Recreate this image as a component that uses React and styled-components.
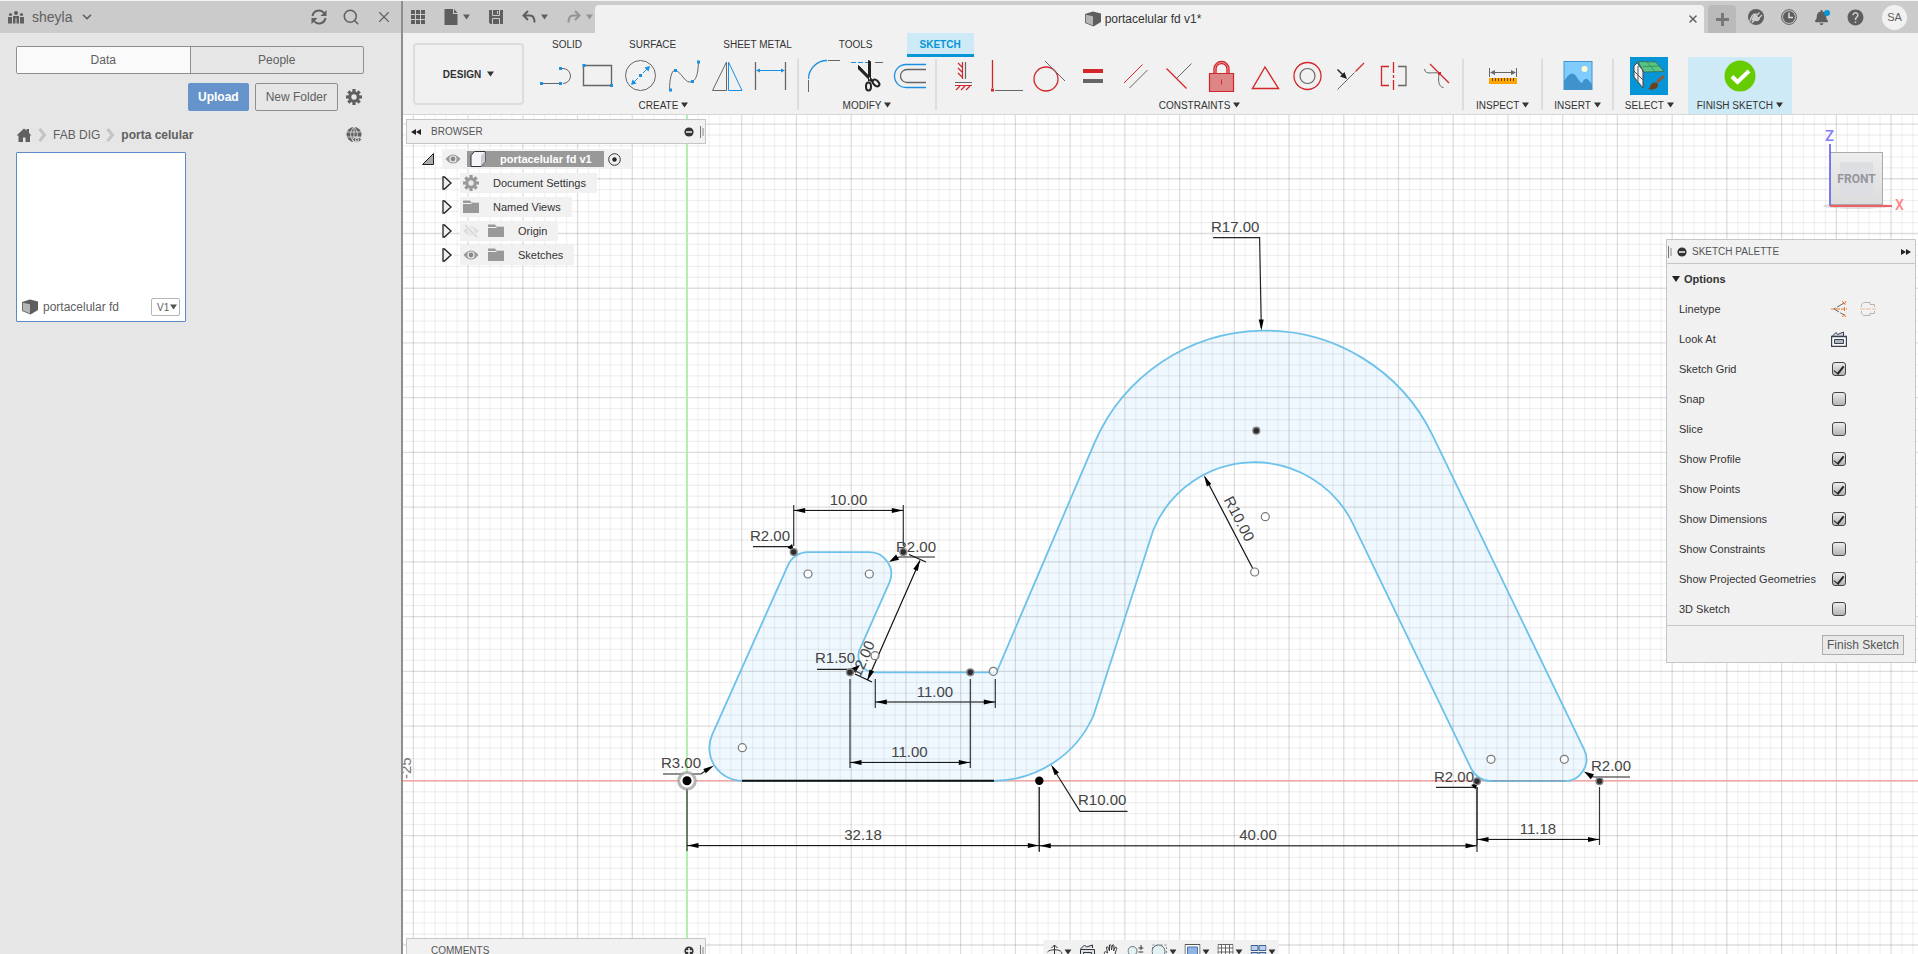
import React, { useState } from "react";
import styled, { createGlobalStyle, css } from "styled-components";
import { FaBell, FaSyncAlt } from "react-icons/fa";
import { MdHelp } from "react-icons/md";
import { ChevronDown, Search, X } from "lucide-react";

const GRAY = "#666666";
const BLUE = "#1a8fe3";
const RED = "#d2262b";

/* ---------- small shared drawings ---------- */

const Caret = ({ color = "#333" }) => (
    <svg width="7" height="6" viewBox="0 0 7 6" aria-hidden="true">
        <path d="M0 0.5h7L3.5 5.5z" fill={color} />
    </svg>
);

const CubeIcon = () => (
    <svg width="16" height="16" viewBox="0 0 16 16" aria-hidden="true">
        <path d="M0 3 8 0.500 16 2.500V11L8.500 15.500 0 12z" fill="#5e5e5e" />
        <path d="M0.800 3.800 8 5.200V14.600L0.800 11.500z" fill="#b5b5b5" />
    </svg>
);

const GearIcon = ({ color = "#606060" }) => (
    <svg width="16" height="16" viewBox="-8 -8 16 16" aria-hidden="true">
        {[0, 45, 90, 135].map((a) => (
            <rect key={a} x="-1.6" y="-8" width="3.2" height="16" fill={color} transform={`rotate(${a})`} />
        ))}
        <circle r="5.800" fill={color} />
        <circle r="2.700" fill="#e9e9e9" />
    </svg>
);

const EyeIcon = ({ off }) => (
    <svg width="16" height="16" viewBox="0 0 16 16" aria-hidden="true">
        <path d="M0.500 8Q8-1 15.500 8 8 17 0.500 8z" fill={off ? "#dcdcdc" : "#999"} />
        <circle cx="8" cy="8" r="3.600" fill="#f1f1f1" />
        <circle cx="8" cy="8" r="2.400" fill={off ? "#dcdcdc" : "#888"} />
        {off && <path d="M3 2l11 12" stroke="#f1f1f1" strokeWidth="3" />}
        {off && <path d="M2 2l12 12" stroke="#d4d4d4" strokeWidth="1.300" />}
    </svg>
);

const FolderIcon = () => (
    <svg width="16" height="16" viewBox="0 0 16 16" aria-hidden="true">
        <path d="M0 1.500h7l1 1.500h8v11H0z" fill="#999" />
        <path d="M0 4.500h8l1.500-1.300H16" stroke="#f1f1f1" fill="none" />
    </svg>
);

const CircleMark = ({ plus }) => (
    <svg width="10" height="10" viewBox="0 0 10 10" aria-hidden="true">
        <circle cx="5" cy="5" r="4.600" fill="#333" />
        <path d={plus ? "M2 5h6M5 2v6" : "M2 5h6"} stroke="#fff" strokeWidth="1.400" />
    </svg>
);

const DoubleArrow = ({ right }) => (
    <svg width="10" height="6" viewBox="0 0 10 6" aria-hidden="true">
        <path d={right ? "M0 0l5 3-5 3zM5 0l5 3-5 3z" : "M5 0L0 3l5 3zM10 0L5 3l5 3z"} fill="#222" />
    </svg>
);

const Grip = () => (
    <svg width="4" height="12" viewBox="0 0 4 12" aria-hidden="true">
        <path d="M0.500 0v12" stroke="#777" />
        <path d="M3 2v8" stroke="#888" />
    </svg>
);

/* ---------- ribbon drawings, all on a 32 box ---------- */

const Dot = ({ x, y, c = BLUE }) => <rect x={x - 1.5} y={y - 1.5} width="3" height="3" fill={c} />;

const createTools = [
    ["Line", <><path d="M1 23.500H20M20 8.500h3a7.500 7.500 0 0 1 0 15" stroke={GRAY} /><Dot x={1.5} y={23.5} /><Dot x={20.5} y={23.5} /><Dot x={20.5} y={8.5} /></>],
    ["Rectangle", <><path d="M0.500 5.500h28v20h-28z" stroke={GRAY} strokeWidth="1.400" /><Dot x={1} y={5.5} /><Dot x={28.5} y={25.5} /></>],
    ["Circle", <><circle cx="14.500" cy="15.500" r="15" stroke={GRAY} /><path d="M7 23l5-5M17 13l5-5" stroke={BLUE} /><path d="M5 25l1.500-5.500 4 4zM24 6l-1.500 5.500-4-4z" fill={BLUE} /><Dot x={14.5} y={15.5} /></>],
    ["Spline", <><path d="M0.500 30.500C0.500 18 3 9 6.500 10.500 13 12 16 25 23.500 21.500 28 19 29 12 29.500 2" stroke={GRAY} /><Dot x={1.5} y={30} /><Dot x={6.5} y={10.5} /><Dot x={23.5} y={21.5} /><Dot x={29.5} y={2} /></>],
    ["Mirror", <><path d="M0.500 30.500 14.500 2v28.500z" stroke={GRAY} /><path d="M16.500 2v28.500h13.500z" stroke={BLUE} /></>],
    ["Sketch Dimension", <><path d="M0.500 2v28M30.500 2v28" stroke={GRAY} strokeWidth="1.300" /><path d="M2 10.500h27" stroke={BLUE} /><path d="M1 10.500l4-2v4zM30 10.500l-4-2v4z" fill={BLUE} /></>],
];

const modifyTools = [
    ["Fillet", <><path d="M0.500 32V20M20 0.500h12" stroke={GRAY} /><path d="M0.500 19A18.500 18.500 0 0 1 19 0.500" stroke={BLUE} strokeWidth="1.300" /></>],
    ["Trim", <><path d="M0 2.500h17" stroke={BLUE} strokeDasharray="5 2" /><path d="M24 2.500h8" stroke={GRAY} /><path d="M17.500 0.500l2 1v18l-2 1.500zM7.500 5.500V9l13 13 1.500-1.500z" fill="#222" stroke="#222" strokeWidth="1" /><ellipse cx="17.500" cy="26.500" rx="2.500" ry="4" stroke="#222" strokeWidth="2" /><ellipse cx="25" cy="23" rx="2.500" ry="4" stroke="#222" strokeWidth="2" transform="rotate(-45 25 23)" /></>],
    ["Offset", <><path d="M32 4.500H12a11.500 11.500 0 0 0 0 23h20" stroke={BLUE} strokeWidth="1.300" /><path d="M32 9.500H13a6.500 6.500 0 0 0 0 13h19" stroke={GRAY} strokeWidth="1.300" /></>],
];

const constraintTools = [
    ["Horizontal/Vertical", <><path d="M15.500 2v17M8 25.500h17M11 3l4 4M11 8l4 4M11 13l4 4M9 30l4-4M14 30l4-4M19 30l4-4" stroke={RED} strokeWidth="1.200" /><path d="M18.500 2v17M8 22.500h17" stroke={GRAY} strokeWidth="1.200" /></>],
    ["Coincident", <><path d="M2.500 0v28" stroke={RED} strokeWidth="1.300" /><path d="M5 30.500h28" stroke={GRAY} /><Dot x={2.5} y={30} c={RED} /></>],
    ["Tangent", <><circle cx="13" cy="19" r="12" stroke={RED} strokeWidth="1.300" /><path d="M12 1l20 20" stroke={GRAY} /></>],
    ["Equal", <><path d="M7 11h20" stroke={RED} strokeWidth="4" /><path d="M7 21h20" stroke={GRAY} strokeWidth="4" /></>],
    ["Parallel", <><path d="M5 23 23.500 4.500" stroke={RED} /><path d="M10.500 28l18-18" stroke={GRAY} /></>],
    ["Perpendicular", <><path d="M4.500 8.500l20 20" stroke={RED} strokeWidth="1.200" /><path d="M14.500 18.500l15-15" stroke={GRAY} /></>],
    ["Fix/Unfix", <><path d="M10 13V9a6.500 6.500 0 0 1 13 0v4" stroke={RED} strokeWidth="3.400" /><path d="M10 13V9a6.500 6.500 0 0 1 13 0v4" stroke="#e79a9b" /><path d="M4.500 13.500h24v18h-24z" fill="#dd8688" stroke={RED} strokeWidth="1.200" /><path d="M16.500 19.500v5" stroke={RED} /></>],
    ["Polygon", <path d="M17 7 4.500 28.500h26z" stroke={RED} strokeWidth="1.400" />],
    ["Concentric", <><circle cx="16.500" cy="16" r="13.500" stroke={RED} strokeWidth="1.300" /><circle cx="16.500" cy="16" r="7.500" stroke={GRAY} strokeWidth="1.200" /></>],
    ["MidPoint", <><path d="M3.500 29.500l17-17" stroke={GRAY} /><path d="M21.500 11.500 30 3" stroke={RED} strokeWidth="1.200" /><path d="M3.500 9.500l6 6" stroke="#222" strokeWidth="1.400" /><path d="M13 19l-7-2.500 4.500-4.500z" fill="#222" /></>],
    ["Symmetry", <><path d="M12 6.500H4.500v19H12M16.500 2v11M16.500 15v3M16.500 20v10" stroke={RED} strokeWidth="1.300" /><path d="M21 6.500h8v19h-8" stroke={GRAY} strokeWidth="1.300" /></>],
    ["Curvature", <><path d="M10 4l19 19" stroke={RED} strokeWidth="1.200" /><path d="M4.500 9c1 7 9 2 15 4.500-2 5-1 14 4 14" stroke={GRAY} /><Dot x={19.5} y={13.5} c={RED} /></>],
];

const InspectArt = (
    <>
        <path d="M2.500 8v9M29.500 8v9M5 12.500h22" stroke={GRAY} />
        <path d="M3 12.500l5-2.500v5zM29 12.500l-5-2.500v5z" fill={GRAY} />
        <rect x="2" y="18" width="28" height="6" fill="#ffa500" />
        <path d="M5.500 18v3M8.500 18v3M11.500 18v3M14.500 18v3M17.500 18v3M20.500 18v3M23.500 18v3M26.500 18v3" stroke="#6b4a10" />
    </>
);

const InsertArt = (
    <>
        <rect x="2" y="1.500" width="28" height="28" fill="#80ccff" stroke="#4594d0" />
        <path d="M2 21c4-6 7-9 10-7s5 8 8 9c2-4 4-5 6-3.500l4 4.500v6H2z" fill="#3f93cd" />
        <circle cx="22.500" cy="9" r="3" fill="#fffbd0" />
    </>
);

const SelectArt = () => (
    <svg width="38" height="38" viewBox="0 0 38 38" aria-hidden="true">
        <rect width="38" height="38" fill="#0696d7" />
        <path d="M8 4.500 26 5l8 9.500-20 0.500z" fill="#58c585" stroke="#3c6650" strokeWidth="0.800" />
        <path d="M13 9.500l17-0.500M17 5l8 9.500" stroke="#2c8a52" fill="none" strokeWidth="0.800" />
        <path d="M4 9 7.500 5.500c1.500 5 5 5.500 5.500 9.500v16L4 20z" fill="#f3f3f3" stroke="#444" />
        <path d="M8 9v15.500M4 14l9 9" stroke="#555" />
        <path d="M34 19 27 25" stroke="#8c5a3c" strokeWidth="3" />
        <path d="M18 32c3-1 2-6 6-6.500s5 3 3 5-6 3-9 1.500z" fill="#704018" />
    </svg>
);

/* ---------- styles ---------- */

const GlobalStyle = createGlobalStyle`
    * {
        box-sizing: border-box;
    }
    html, body, #root {
        height: 100%;
        margin: 0;
    }
    body {
        overflow: hidden;
        background: #f1f1f1;
        font-family: "Liberation Sans", Arial, sans-serif;
        font-size: 12px;
        color: #333;
    }
    button {
        font: inherit;
        color: inherit;
        border: none;
        background: none;
        padding: 0;
    }
    svg {
        display: block;
        flex: none;
    }
`;

const Shell = styled.div`
    display: flex;
    height: 100vh;
    border-top: 1px solid #f4f4f4;
`;

const DataPanel = styled.aside`
    flex: 0 0 403px;
    background: #e6e6e6;
    border-right: 2px solid #8f8f8f;
    color: #606060;
`;

const PanelHeader = styled.header`
    display: flex;
    align-items: center;
    gap: 8px;
    height: 32px;
    padding: 0 8px;
    background: #cbcbcb;
    font-size: 14px;
`;

const Spacer = styled.span`
    flex: 1;
`;

const HeaderActions = styled.div`
    display: flex;
    align-items: center;
    gap: 15px;
`;

const PanelBody = styled.div`
    display: flex;
    flex-direction: column;
    width: 348px;
    margin: 13px 0 0 16px;
`;

const Segments = styled.div`
    display: flex;
    height: 28px;
    border: 1px solid #8f8f8f;
    border-radius: 2px;
`;

const Segment = styled.button`
    flex: 1;
    background: ${(props) => (props.$active ? "#fafafa" : "transparent")};

    & + & {
        border-left: 1px solid #8f8f8f;
    }
`;

const UploadRow = styled.div`
    display: flex;
    align-items: center;
    justify-content: flex-end;
    gap: 6px;
    margin: 9px 2px 0 0;
`;

const PanelBtn = styled.button`
    height: 28px;
    border-radius: 2px;
    padding: 0 10px;
    ${(props) =>
        props.$primary
            ? css`
                  background: #6694ca;
                  color: white;
                  font-weight: bold;
              `
            : css`
                  border: 1px solid #8f8f8f;
                  margin-right: 2px;
              `}
`;

const Crumbs = styled.nav`
    display: flex;
    align-items: center;
    gap: 6px;
    height: 16px;
    margin: 16px 2px 9px 0;
`;

const Crumb = styled.a`
    color: #606060;
    text-decoration: none;
    font-weight: ${(props) => (props.$current ? "bold" : "normal")};
`;

const FileCard = styled.article`
    display: flex;
    align-items: flex-end;
    width: 170px;
    height: 170px;
    padding: 5px;
    background: white;
    border: 1px solid #5b8bc8;
    border-radius: 1px;
`;

const FileRow = styled.div`
    display: flex;
    align-items: center;
    gap: 5px;
    width: 100%;
`;

const VersionBtn = styled.button`
    display: flex;
    align-items: center;
    justify-content: space-between;
    width: 29px;
    height: 18px;
    padding: 0 2px 0 5px;
    border: 1px solid #b5b5b5;
    border-radius: 2px;
    font-size: 10px;
`;

const Workspace = styled.main`
    flex: 1;
    min-width: 0;
    display: flex;
    flex-direction: column;
`;

const TitleBar = styled.header`
    display: flex;
    align-items: flex-end;
    height: 32px;
    background: #cbcbcb;
`;

const QuickTools = styled.div`
    display: flex;
    align-items: center;
    gap: 19px;
    height: 32px;
    width: 192px;
    padding: 0 0 0 8px;
`;

const QuickBtn = styled.button`
    display: flex;
    align-items: center;
    gap: 5px;
    opacity: ${(props) => (props.$dim ? 0.5 : 1)};
`;

const DocTab = styled.div`
    flex: 1;
    display: flex;
    align-items: center;
    height: 28px;
    padding: 0 5px 0 4px;
    background: #f1f1f1;
    border-radius: 4px 4px 0 0;
`;

const DocTitle = styled.div`
    flex: 1;
    display: flex;
    align-items: center;
    justify-content: center;
    gap: 4px;
    height: 28px;
`;

const NewTab = styled.button`
    display: flex;
    align-items: center;
    justify-content: center;
    width: 28px;
    height: 28px;
    margin-left: 4px;
    background: #bababa;
    border-radius: 4px 4px 0 0;
`;

const StatusTools = styled.div`
    display: flex;
    align-items: center;
    gap: 17px;
    height: 32px;
    padding: 0 11px 0 12px;
    color: #5e5e5e;
`;

const BellBtn = styled.button`
    position: relative;
    font-size: 16px;

    &::after {
        content: "";
        position: absolute;
        top: 0;
        right: -1px;
        width: 6px;
        height: 6px;
        border-radius: 50%;
        background: #0696d7;
    }
`;

const Avatar = styled.button`
    width: 25px;
    height: 25px;
    border-radius: 50%;
    background: #f1f1f1;
    font-size: 11px;
`;

const Ribbon = styled.section`
    display: flex;
    height: 82px;
    border-bottom: 1px solid #d6d6d6;
    font-size: 10px;
    overflow: hidden;
`;

const DesignBtn = styled.button`
    display: flex;
    align-items: center;
    justify-content: center;
    gap: 6px;
    flex: none;
    width: 111px;
    height: 62px;
    margin: 10px 6px 0 10px;
    border: 2px solid #dddddd;
    border-radius: 4px;
    font-weight: bold;
`;

const Tabs = styled.div`
    display: flex;
    gap: 21px;
    height: 24px;
    padding-left: 9px;
`;

const Tab = styled.button`
    height: 24px;
    padding: 0 13px 2px;
    ${(props) =>
        props.$active &&
        css`
            background: #cdeaf6;
            color: #0696d7;
            font-weight: bold;
            border-bottom: 3px solid #0696d7;
            padding: 1px 13px 0;
        `}
`;

const Groups = styled.div`
    display: flex;
    height: 57px;
`;

const Group = styled.div`
    display: flex;
    flex-direction: column;
    align-items: center;
    justify-content: space-between;
    height: 57px;
    padding: 0 ${(props) => props.$pad || 11}px 2px;
    background: ${(props) => (props.$tint ? "#cdeaf6" : "transparent")};
    margin-left: ${(props) => (props.$tint ? 3 : 0)}px;
`;

const Divider = styled.span`
    width: 2px;
    height: 51px;
    margin-top: 2px;
    background: #dddddd;
`;

const ToolRow = styled.div`
    display: flex;
    align-items: center;
    gap: 11px;
    height: 38px;
`;

const ToolBtn = styled.button`
    display: block;
`;

const GroupLabel = styled.button`
    display: flex;
    align-items: center;
    gap: 3px;
    height: 14px;
    white-space: nowrap;
`;

const Canvas = styled.section`
    position: relative;
    flex: 1;
    min-height: 0;
    overflow: hidden;
    background: white;
`;

const Drawing = styled.svg`
    width: 100%;
    height: 100%;
    font-size: 15px;
`;

const BrowserBox = styled.div`
    position: absolute;
    top: 4px;
    left: 3px;
    width: 300px;
`;

const CommentsBox = styled.div`
    position: absolute;
    bottom: -9px;
    left: 3px;
    width: 300px;
`;

const BoxHeader = styled.header`
    display: flex;
    align-items: center;
    gap: 10px;
    height: 25px;
    padding: 0 4px;
    background: #f1f1f1;
    border: 1px solid #c6c6c6;
    font-size: 10px;
    color: #555;
`;

const HeaderEnd = styled.span`
    display: flex;
    align-items: center;
    gap: 6px;
    margin-left: auto;
    margin-right: -3px;
`;

const ArrowSlot = styled.span`
    width: 10px;
`;

const Tree = styled.ul`
    display: flex;
    flex-direction: column;
    gap: 4px;
    margin: 5px 0 0;
    padding: 0;
    list-style: none;
    font-size: 11px;
`;

const TreeItem = styled.li`
    display: flex;
    align-items: center;
    gap: 8px;
    height: 20px;
    padding-left: ${(props) => (props.$root ? 16 : 36)}px;
`;

const TreeLabel = styled.span`
    display: flex;
    align-items: center;
    gap: 9px;
    height: 20px;
    padding: 0 11px 0 3px;
    background: #f1f1f1;
`;

const TreeText = styled.span`
    padding-left: 5px;
`;

const RootName = styled.span`
    display: flex;
    align-items: center;
    gap: 14px;
    height: 16px;
    margin-left: -3px;
    margin-right: -5px;
    padding: 0 12px 0 3px;
    background: #999;
    color: white;
    font-weight: bold;
`;

const Palette = styled.form`
    position: absolute;
    top: 124px;
    right: 2px;
    width: 250px;
    background: #f1f1f1;
    border: 1px solid #c6c6c6;
    font-size: 11px;
`;

const PaletteHeader = styled.header`
    display: flex;
    align-items: center;
    gap: 5px;
    height: 24px;
    padding: 0 4px 0 1px;
    border-bottom: 1px solid #c6c6c6;
    font-size: 10px;
    color: #555;
`;

const OptionsTitle = styled.h2`
    display: flex;
    align-items: center;
    gap: 4px;
    height: 30px;
    margin: 0;
    padding-left: 5px;
    font-size: 11px;
`;

const Option = styled.div`
    display: grid;
    grid-template-columns: 152px 1fr;
    align-items: center;
    height: 30px;
    padding-left: 12px;
`;

const OptionTools = styled.span`
    display: flex;
    gap: 13px;
`;

const Check = styled.input`
    appearance: none;
    display: grid;
    place-items: center;
    width: 14px;
    height: 14px;
    margin: 0 1px;
    border: 1px solid #444;
    border-radius: 3px;
    background: linear-gradient(#ececec, #b4b4b4);

    &:checked::after {
        content: "";
        width: 4px;
        height: 9px;
        border: solid #222;
        border-width: 0 2px 1px 0;
        transform: rotate(38deg);
    }
`;

const PaletteFooter = styled.footer`
    display: flex;
    justify-content: flex-end;
    margin-top: 1px;
    padding: 9px 11px 7px;
    border-top: 1px solid #c6c6c6;
`;

const FinishBtn = styled.button`
    height: 20px;
    padding: 0 4px;
    border: 1px solid #adadad;
    background: #e9e9e9;
    font-size: 12px;
    color: #555;
`;

const ViewCube = styled.svg`
    position: absolute;
    top: 9px;
    right: 8px;
    font-family: Roboto, "Liberation Sans", sans-serif;
    font-weight: 500;
`;

const NavBar = styled.div`
    position: absolute;
    bottom: -10px;
    left: 50%;
    transform: translateX(-50%);
    display: flex;
    align-items: center;
    gap: 8px;
    height: 24px;
    padding: 0 3px;
    background: #f1f1f1;
`;

const NavBtn = styled.button`
    display: flex;
    align-items: center;
    gap: 2px;
`;

/* ---------- sketch canvas ---------- */

// sketch units to canvas pixels, origin is where the two axes cross
const UNIT = 10.946;
const ORIGIN = { x: 687, y: 780.8 };

const PROFILE =
    "M742 780.8H994A109.5 109.5 0 0 0 1093.5 715.5L1153.3 530A109.5 109.5 0 0 1 1353.1 524.1" +
    "L1471.3 768.9A21.9 21.9 0 0 0 1491 781.2H1564.3A21.9 21.9 0 0 0 1584.2 749.7" +
    "L1432.6 435.4A186 186 0 0 0 1094.5 442.8L996.5 672.3H875A16.4 16.4 0 0 1 859.9 649.2" +
    "L889.4 582.7A21.9 21.9 0 0 0 869.3 552.1H808A21.9 21.9 0 0 0 787.9 565.3" +
    "L712.2 734.7A32.8 32.8 0 0 0 742 780.8Z";

const openPoints = [
    [808, 574], [869.3, 574], [875, 655.7], [742.3, 747.7], [1254.7, 572],
    [1265.3, 516.7], [1491, 759.3], [1564.3, 759.3], [993.3, 671.3],
];

const solidPoints = [
    [793.7, 552], [903.3, 552], [850, 672.3], [970.3, 672.3],
    [1256.3, 430.7], [1477, 781.3], [1599.5, 781.3],
];

const linearDims = [
    { x1: 793.7, x2: 903.3, y: 510.4, top: 505, bottom: 546, text: "10.00", tx: 848.5 },
    { x1: 875.3, x2: 995.3, y: 702, top: 679, bottom: 708, text: "11.00", tx: 935 },
    { x1: 850, x2: 970.3, y: 762.4, top: 679, bottom: 768, text: "11.00", tx: 909.5 },
    { x1: 687, x2: 1039.3, y: 845.6, top: 787, bottom: 851, text: "32.18", tx: 863 },
    { x1: 1039.3, x2: 1477, y: 845.8, top: 787, bottom: 852, text: "40.00", tx: 1258 },
    { x1: 1477, x2: 1599.5, y: 839.4, top: 787, bottom: 845, text: "11.18", tx: 1538 },
];

const radiusDims = [
    { text: "R17.00", x: 1211, y: 232, line: "M1213 237.6H1259.6L1261.3 328", tip: [1261.4, 330.5, 89], s: 1 },
    { text: "R2.00", x: 750, y: 541, line: "M753 546.6H790", tip: [794, 551, 50], s: 0.6 },
    { text: "R2.00", x: 896, y: 551.5, line: "M935 557H899L893 560", tip: [889, 562, 150], s: 0.9 },
    { text: "R1.50", x: 815, y: 663.4, line: "M817 669.4H852L857 667", tip: [860, 665, -40], s: 0.8 },
    { text: "R3.00", x: 661, y: 767.6, line: "M663 774H701L708 769", tip: [714, 765.5, -31], s: 1 },
    { text: "R10.00", x: 1078, y: 805, line: "M1127.5 811.4H1080L1056 773", tip: [1051, 764.5, -122], s: 1 },
    { text: "R2.00", x: 1434, y: 782, line: "M1436 787.4H1474", tip: [1478, 782.5, -45], s: 0.6 },
    { text: "R2.00", x: 1591, y: 771, line: "M1630 777H1593L1589 775", tip: [1584, 771.5, 212], s: 0.9 },
];

const ArrowHead = ({ x, y, angle, s = 1 }) => (
    <path d="M0 0l-11-2.500v5z" fill="black" transform={`translate(${x} ${y}) rotate(${angle}) scale(${s} ${s === 1 ? 1 : 1.2})`} />
);

const GridLines = () => {
    const lines = [];
    for (let i = -25; i <= 220; i++) {
        const p = ORIGIN.x + i * UNIT;
        lines.push(<path key={`v${i}`} d={`M${p} 0V2400`} strokeOpacity={i % 5 ? 0.05 : 0.13} />);
    }
    for (let i = -140; i <= 62; i++) {
        const p = ORIGIN.y + i * UNIT;
        lines.push(<path key={`h${i}`} d={`M400 ${p}H3200`} strokeOpacity={i % 5 ? 0.06 : 0.13} />);
    }
    return <g stroke="black" strokeWidth="1.300">{lines}</g>;
};

const SketchDrawing = () => (
    <Drawing role="img" aria-label="Sketch">
        <g transform="translate(-403 -115)" fill="none">
            <path d={PROFILE} fill="#eff8fe" />
            <GridLines />
            <path d={`M400 ${ORIGIN.y}H3200`} stroke="#f4a6a6" strokeWidth="1.400" />
            <path d={`M${ORIGIN.x} 0V2400`} stroke="#b2efb2" strokeWidth="2" />
            <path d={PROFILE} stroke="#6cc2ea" strokeWidth="1.800" />
            <path d="M742 780.800H994" stroke="#111" strokeWidth="2" />
            <path d="M1491 780.800H1565" stroke="#8a9aa8" strokeWidth="1" />

            {linearDims.map((d) => (
                <g key={d.tx}>
                    <path d={`M${d.x1} ${d.top}V${d.bottom}M${d.x2} ${d.top}V${d.bottom}`} stroke="#333" strokeWidth="1.200" />
                    <path d={`M${d.x1} ${d.y}H${d.x2}`} stroke="black" />
                    <ArrowHead x={d.x1 + 0.5} y={d.y} angle={180} />
                    <ArrowHead x={d.x2 - 0.5} y={d.y} angle={0} />
                    <text x={d.tx} y={d.y - 5.5} textAnchor="middle" fill="#444">{d.text}</text>
                </g>
            ))}

            {radiusDims.map((d) => (
                <g key={d.text + d.x}>
                    <path d={d.line} stroke="#222" strokeWidth="1.200" />
                    <ArrowHead x={d.tip[0]} y={d.tip[1]} angle={d.tip[2]} s={d.s} />
                    <text x={d.x} y={d.y} fill="#444">{d.text}</text>
                </g>
            ))}

            {/* slanted dimensions */}
            <path d="M909 554.500l17 7.500M855 674l17 8M920 560.500 867.500 680" stroke="#111" strokeWidth="1.200" />
            <ArrowHead x={920} y={560} angle={-66} />
            <ArrowHead x={867.3} y={680.5} angle={114} />
            <text transform="translate(860 678) rotate(-66)" fill="#444">12.00</text>
            <path d="M1252.500 568 1205 477" stroke="#111" strokeWidth="1.200" />
            <ArrowHead x={1204} y={475.5} angle={242.5} />
            <text transform="translate(1239 519) rotate(62.500)" y="5" textAnchor="middle" fill="#444">R10.00</text>
            <text transform="translate(411 779) rotate(-90)" fill="#777">-25</text>

            {openPoints.map(([x, y]) => (
                <circle key={`${x}-${y}`} cx={x} cy={y} r="4" fill="white" fillOpacity="0.700" stroke="#777" strokeWidth="1.200" />
            ))}
            {solidPoints.map(([x, y]) => (
                <circle key={`${x}-${y}`} cx={x} cy={y} r="3.400" fill="#2c2c2c" stroke="#888" strokeWidth="1.400" />
            ))}
            <circle cx={ORIGIN.x} cy={ORIGIN.y} r="8.300" fill="white" stroke="#999" strokeOpacity="0.700" strokeWidth="3" />
            <circle cx={ORIGIN.x} cy={ORIGIN.y} r="4.500" fill="black" />
            <circle cx="1039.300" cy={ORIGIN.y} r="4.200" fill="black" />
        </g>
    </Drawing>
);

/* ---------- page parts ---------- */

const CrumbArrow = () => (
    <svg width="9" height="14" viewBox="0 0 9 14" aria-hidden="true">
        <path d="M1.500 1l5 6-5 6" stroke="#c4c4c4" strokeWidth="3" fill="none" />
    </svg>
);

const DataSide = () => {
    const [tab, setTab] = useState("Data");

    return (
        <DataPanel>
            <PanelHeader>
                <svg width="16" height="13" viewBox="0 0 16 13" fill="#606060" aria-hidden="true">
                    <circle cx="8" cy="2" r="2" />
                    <circle cx="2.500" cy="3.500" r="1.600" />
                    <circle cx="13.500" cy="3.500" r="1.600" />
                    <path d="M5 5h6v7.500H5zM0 6h4v6.500H0zM12 6h4v6.500h-4z" />
                    <path d="M8 7v6" stroke="#cbcbcb" />
                </svg>
                <span>sheyla</span>
                <ChevronDown size={14} strokeWidth={3} />
                <Spacer />
                <HeaderActions>
                    <button aria-label="Refresh">
                        <svg width="16" height="16" viewBox="0 0 16 16" fill="none">
                            <path d="M1.500 7A6.500 6.500 0 0 1 13 4M14.500 9A6.500 6.500 0 0 1 3 12" stroke="#606060" strokeWidth="2" />
                            <path d="M15.500 1v6H9.500zM0.500 15V9h6z" fill="#606060" />
                        </svg>
                    </button>
                    <button aria-label="Search"><Search size={18} strokeWidth={2} /></button>
                    <button aria-label="Close"><X size={18} strokeWidth={1.500} /></button>
                </HeaderActions>
            </PanelHeader>
            <PanelBody>
                <Segments>
                    {["Data", "People"].map((name) => (
                        <Segment key={name} $active={tab === name} onClick={() => setTab(name)}>
                            {name}
                        </Segment>
                    ))}
                </Segments>
                <UploadRow>
                    <PanelBtn $primary>Upload</PanelBtn>
                    <PanelBtn>New Folder</PanelBtn>
                    <button aria-label="Settings"><GearIcon /></button>
                </UploadRow>
                <Crumbs>
                    <Crumb href="#" aria-label="Home">
                        <svg width="16" height="14" viewBox="0 0 15 14" fill="#606060">
                            <path d="M0 7.500 7.500 0.500l2.500 2V1h2.500v4L15 7.500h-1.500V14H9V9.500H6.500V14H2V7.500z" />
                        </svg>
                    </Crumb>
                    <CrumbArrow />
                    <Crumb href="#">FAB DIG</Crumb>
                    <CrumbArrow />
                    <Crumb href="#" $current>porta celular</Crumb>
                    <Spacer />
                    <button aria-label="Open on the web">
                        <svg width="16" height="16" viewBox="0 0 16 16" fill="none">
                            <circle cx="8" cy="7.500" r="7.500" fill="#606060" />
                            <path d="M0 5h16M0 10h16M8 0v16M8 0C3.500 4 3.500 11 8 15M8 0c4.500 4 4.500 11 0 15" stroke="#e6e6e6" strokeWidth="0.800" />
                            <path d="M6 12.500Q11 7.500 16 12.500 11 18 6 12.500z" fill="#606060" stroke="#e6e6e6" />
                            <circle cx="11" cy="12.700" r="1.600" stroke="#e6e6e6" />
                        </svg>
                    </button>
                </Crumbs>
                <FileCard>
                    <FileRow>
                        <CubeIcon />
                        <span>portacelular fd</span>
                        <Spacer />
                        <VersionBtn>V1<Caret color="#555" /></VersionBtn>
                    </FileRow>
                </FileCard>
            </PanelBody>
        </DataPanel>
    );
};

const TopBar = () => (
    <TitleBar>
        <QuickTools>
            <QuickBtn aria-label="Apps">
                <svg width="14" height="14" viewBox="0 0 14 14" fill="#5e5e5e">
                    {[0, 5, 10].map((x) => [0, 5, 10].map((y) => <rect key={`${x}${y}`} x={x} y={y} width="4" height="4" />))}
                </svg>
            </QuickBtn>
            <QuickBtn aria-label="File">
                <svg width="14" height="16" viewBox="0 0 14 16" fill="#5e5e5e"><path d="M0.500 0H9v5h4.500v11h-13zM10 0l3.500 4H10z" /></svg>
                <Caret color="#5e5e5e" />
            </QuickBtn>
            <QuickBtn aria-label="Save">
                <svg width="14" height="14" viewBox="0 0 14 14" fill="#5e5e5e">
                    <path d="M0 0h14v14H1.500L0 12.500z" />
                    <path d="M3.500 0v5.500h7V0M3.500 14V8.500h7V14M8.500 1v3" stroke="#cbcbcb" fill="none" />
                </svg>
            </QuickBtn>
            <QuickBtn aria-label="Undo">
                <svg width="14" height="14" viewBox="0 0 14 14" fill="none" stroke="#5e5e5e" strokeWidth="2">
                    <path d="M6 1 1.500 5.500 6 10M2 5.500h6c3 0 4.500 2 4.500 7" />
                </svg>
                <Caret color="#5e5e5e" />
            </QuickBtn>
            <QuickBtn aria-label="Redo" $dim>
                <svg width="14" height="14" viewBox="0 0 14 14" fill="none" stroke="#5e5e5e" strokeWidth="2">
                    <path d="M8 1l4.500 4.500L8 10M12 5.500H6c-3 0-4.500 2-4.500 7" />
                </svg>
                <Caret color="#5e5e5e" />
            </QuickBtn>
        </QuickTools>
        <DocTab>
            <DocTitle>
                <CubeIcon />
                <span>portacelular fd v1*</span>
            </DocTitle>
            <button aria-label="Close document"><X size={12} strokeWidth={3} color="#5e5e5e" /></button>
        </DocTab>
        <NewTab aria-label="New design">
            <svg width="13" height="13" viewBox="0 0 13 13"><path d="M0 6.500h13M6.500 0v13" stroke="#777" strokeWidth="3" /></svg>
        </NewTab>
        <StatusTools>
            <button aria-label="Extensions">
                <svg width="16" height="16" viewBox="0 0 16 16" fill="none">
                    <circle cx="8" cy="8" r="8" fill="#5e5e5e" />
                    <path d="M2 12.500C3 8 4.500 5 7.500 5l1.500 1 2.500-2.500M11.500 8.500 14 6M4 14c1-3 3-3 5-2.500 2-0.500 2.500-2 2.500-3.500" stroke="#cbcbcb" strokeWidth="1.500" />
                    <path d="M3.500 11C5 6 7 5 8.500 6.500l3 2.500c-1 3-3 3-5 3z" fill="#cbcbcb" />
                </svg>
            </button>
            <button aria-label="Job status">
                <svg width="16" height="16" viewBox="0 0 16 16" fill="none">
                    <circle cx="8" cy="8" r="7.400" stroke="#5e5e5e" />
                    <circle cx="8" cy="8" r="6" fill="#5e5e5e" />
                    <path d="M8 3.500V8.500h4" stroke="#dcdcdc" strokeWidth="1.500" />
                </svg>
            </button>
            <BellBtn aria-label="Notifications"><FaBell size={15} /></BellBtn>
            <button aria-label="Help"><MdHelp size={19} /></button>
            <Avatar>SA</Avatar>
        </StatusTools>
    </TitleBar>
);

const ToolGroup = ({ label, tools, children, pad, tint }) => (
    <Group $pad={pad} $tint={tint}>
        <ToolRow>
            {tools?.map(([name, art]) => (
                <ToolBtn key={name} aria-label={name}>
                    <svg width="32" height="32" viewBox="0 0 32 32" fill="none" overflow="visible">{art}</svg>
                </ToolBtn>
            ))}
            {children}
        </ToolRow>
        <GroupLabel>{label}<Caret /></GroupLabel>
    </Group>
);

const FinishArt = (
    <>
        <circle cx="16" cy="16" r="15.500" fill="#66cc00" />
        <path d="M8 16.500l5.500 5.500L25 11" stroke="white" strokeWidth="4" />
    </>
);

const RibbonBar = () => {
    const [active, setActive] = useState("SKETCH");

    return (
        <Ribbon>
            <DesignBtn>DESIGN<Caret /></DesignBtn>
            <div>
                <Tabs>
                    {["SOLID", "SURFACE", "SHEET METAL", "TOOLS", "SKETCH"].map((name) => (
                        <Tab key={name} $active={active === name} onClick={() => setActive(name)}>
                            {name}
                        </Tab>
                    ))}
                </Tabs>
                <Groups>
                    <ToolGroup label="CREATE" tools={createTools} pad={10} />
                    <Divider />
                    <ToolGroup label="MODIFY" tools={modifyTools} pad={9} />
                    <Divider />
                    <ToolGroup label="CONSTRAINTS" tools={constraintTools} pad={10} />
                    <Divider />
                    <ToolGroup label="INSPECT" tools={[["Measure", InspectArt]]} pad={12} />
                    <Divider />
                    <ToolGroup label="INSERT" tools={[["Insert Image", InsertArt]]} />
                    <Divider />
                    <ToolGroup label="SELECT">
                        <ToolBtn aria-label="Select"><SelectArt /></ToolBtn>
                    </ToolGroup>
                    <ToolGroup label="FINISH SKETCH" pad={9} tint tools={[["Finish", FinishArt]]} />
                </Groups>
            </div>
        </Ribbon>
    );
};

const TreeArrow = () => (
    <svg width="10" height="14" viewBox="0 0 10 14" aria-hidden="true">
        <path d="M1 1h1.500L9 7l-6.500 6H1z" fill="#eee" stroke="#222" strokeWidth="1.300" />
    </svg>
);

const treeRows = [
    { text: "Document Settings", icons: [<GearIcon key="g" color="#999" />] },
    { text: "Named Views", icons: [<FolderIcon key="f" />] },
    { text: "Origin", icons: [<EyeIcon key="e" off />, <FolderIcon key="f" />] },
    { text: "Sketches", icons: [<EyeIcon key="e" />, <FolderIcon key="f" />] },
];

const BrowserPanel = () => (
    <BrowserBox>
        <BoxHeader>
            <DoubleArrow />
            <span>BROWSER</span>
            <HeaderEnd><CircleMark /><Grip /></HeaderEnd>
        </BoxHeader>
        <Tree>
            <TreeItem $root>
                <svg width="12" height="12" viewBox="0 0 12 12" aria-hidden="true">
                    <path d="M0.500 11.500 11.500 0.500v11z" fill="#aaa" stroke="#222" />
                </svg>
                <TreeLabel>
                    <EyeIcon />
                    <RootName>
                        <svg width="16" height="16" viewBox="0 0 16 16" aria-hidden="true">
                            <path d="M1 4.500 4.500 0.500H15v10.500l-4 4.500H1z" fill="#f4f5f8" stroke="#333" />
                            <path d="M11 4.500 15 1v10l-4 4z" fill="#c9ccd2" />
                        </svg>
                        portacelular fd v1
                    </RootName>
                    <svg width="13" height="13" viewBox="0 0 13 13" aria-hidden="true">
                        <circle cx="6.500" cy="6.500" r="5.800" fill="none" stroke="#333" />
                        <circle cx="6.500" cy="6.500" r="2.200" fill="#222" />
                    </svg>
                </TreeLabel>
            </TreeItem>
            {treeRows.map((row) => (
                <TreeItem key={row.text}>
                    <TreeArrow />
                    <TreeLabel>
                        {row.icons}
                        <TreeText>{row.text}</TreeText>
                    </TreeLabel>
                </TreeItem>
            ))}
        </Tree>
    </BrowserBox>
);

const options = [
    ["Sketch Grid", true], ["Snap", false], ["Slice", false], ["Show Profile", true],
    ["Show Points", true], ["Show Dimensions", true], ["Show Constraints", false],
    ["Show Projected Geometries", true], ["3D Sketch", false],
];

const SketchPalette = () => (
    <Palette onSubmit={(e) => e.preventDefault()}>
        <PaletteHeader>
            <Grip />
            <CircleMark />
            <span>SKETCH PALETTE</span>
            <Spacer />
            <DoubleArrow right />
        </PaletteHeader>
        <OptionsTitle>
            <svg width="8" height="6" viewBox="0 0 8 6"><path d="M0 0h8L4 6z" fill="#222" /></svg>
            Options
        </OptionsTitle>
        <Option>
            <span>Linetype</span>
            <OptionTools>
                <button type="button" aria-label="Construction">
                    <svg width="16" height="16" viewBox="0 0 16 16" fill="none">
                        <path d="M13 2 3 8l10 6" stroke="#666" strokeDasharray="8 1.500" />
                        <path d="M0 8h16M11 0l4 4M15 0l-2 4M11 16l4-3M15 16l-3-4M13.500 6v4" stroke="#e8762c" strokeDasharray="4 1" />
                    </svg>
                </button>
                <button type="button" aria-label="Centerline">
                    <svg width="16" height="16" viewBox="0 0 16 16" fill="none">
                        <path d="M1.500 6V3.500l2-2H10v2h4.500V6M1.500 10v2.500l2 2H10v-2h4.500V10" stroke="#b5b5b5" />
                        <path d="M0 8h16" stroke="#eebfa0" strokeDasharray="5 1" />
                    </svg>
                </button>
            </OptionTools>
        </Option>
        <Option>
            <span>Look At</span>
            <button type="button" aria-label="Look At">
                <svg width="16" height="16" viewBox="0 0 16 16" fill="none" stroke="#3a4250">
                    <path d="M1.500 5 5 1.500l1.500 2L12.500 1v4" fill="#ccd2da" />
                    <path d="M0.500 5.500h15v10H0.500z" fill="#fbfbfb" strokeWidth="1.400" />
                    <path d="M3.500 8.500h9v4h-9z" fill="#aeb6c2" />
                </svg>
            </button>
        </Option>
        {options.map(([name, on]) => (
            <Option key={name}>
                <label htmlFor={name}>{name}</label>
                <Check type="checkbox" id={name} defaultChecked={on} />
            </Option>
        ))}
        <PaletteFooter>
            <FinishBtn>Finish Sketch</FinishBtn>
        </PaletteFooter>
    </Palette>
);

const Cube = () => (
    <ViewCube width="90" height="90" viewBox="0 0 90 90">
        <defs>
            <linearGradient id="cubeFace" x1="0" y1="0" x2="0" y2="1">
                <stop offset="0" stopColor="#ededed" />
                <stop offset="1" stopColor="#dcdcdc" />
            </linearGradient>
        </defs>
        <ellipse cx="37" cy="82" rx="34" ry="3" fill="#000" fillOpacity="0.120" />
        <rect x="10.500" y="28.500" width="52" height="52" fill="url(#cubeFace)" stroke="#aaa" />
        <rect x="20" y="38" width="33" height="33" fill="#dddee1" />
        <text x="36.500" y="59" fontSize="12" textAnchor="middle" fill="#94969c" fontWeight="700">FRONT</text>
        <path d="M10 20v62" stroke="#6f6ff0" strokeWidth="1.800" />
        <path d="M10 82h62" stroke="#ee5f66" strokeWidth="1.800" />
        <text x="5" y="17" fontSize="15" fill="#8080ff">Z</text>
        <text x="75" y="86" fontSize="14" fill="#ff8585">X</text>
    </ViewCube>
);

const navTools = [
    ["Orbit", true, <path d="M8 1v14M5 4l3-3 3 3M1 8c2-3 12-3 14 0s-4 4-7 3" stroke="#333" />],
    ["Look At", false, <path d="M1 5 5 1l2 2 6-2v3M1 5.500h14v9H1zM4 8.500h8v3H4z" stroke="#333" fill="#dde2e8" />],
    ["Pan", false, <path d="M4 15C2 11 0 9 1 8s3 1 3 1L3 3c1-1 2 0 3 4V1c1-1 2 0 2 5l1-5c1-1 2 0 1 6l2-4c1 0 2 1 0 5l-1 6" stroke="#333" fill="#fafafa" />],
    ["Zoom", false, <><circle cx="5" cy="7" r="4.500" stroke="#5c7280" fill="#e4f2f4" /><path d="M11 4h5M13.500 1v5M11 8h5" stroke="#333" /></>],
    ["Fit", true, <><path d="M1 1h14v14H1z" stroke="#888" strokeDasharray="2 2" /><circle cx="7" cy="7.500" r="6.500" stroke="#5c7280" fill="#e4f2f4" /></>],
    ["Display Settings", true, <><path d="M0.500 0.500h15v14H0.500z" stroke="#555" fill="#fff" /><path d="M3 3h10v9H3z" fill="#8fb5e6" stroke="#4a74ad" /></>],
    ["Grid and Snaps", true, <><path d="M0.500 0.500h15v14H0.500z" fill="#fff" /><path d="M0.500 0.500h15v14H0.500zM4 0v15M8 0v15M12 0v15M0 4h16M0 8h16M0 12h16" stroke="#666" /></>],
    ["Viewports", true, <path d="M0.500 1.500h7v5h-7zM8.500 1.500h7v5h-7zM0.500 8.500h7v5h-7zM8.500 8.500h7v5h-7z" stroke="#3f5f8c" fill="#b8cfee" />],
];

const App = () => {
    return (
        <>
            <GlobalStyle />
            <Shell>
                <DataSide />
                <Workspace>
                    <TopBar />
                    <RibbonBar />
                    <Canvas>
                        <SketchDrawing />
                        <BrowserPanel />
                        <Cube />
                        <SketchPalette />
                        <CommentsBox>
                            <BoxHeader>
                                <ArrowSlot />
                                <span>COMMENTS</span>
                                <HeaderEnd><CircleMark plus /><Grip /></HeaderEnd>
                            </BoxHeader>
                        </CommentsBox>
                        <NavBar>
                            {navTools.map(([name, menu, art]) => (
                                <NavBtn key={name} aria-label={name}>
                                    <svg width="16" height="16" viewBox="0 0 16 16" fill="none">{art}</svg>
                                    {menu && <Caret />}
                                </NavBtn>
                            ))}
                        </NavBar>
                    </Canvas>
                </Workspace>
            </Shell>
        </>
    );
};

export default App;
